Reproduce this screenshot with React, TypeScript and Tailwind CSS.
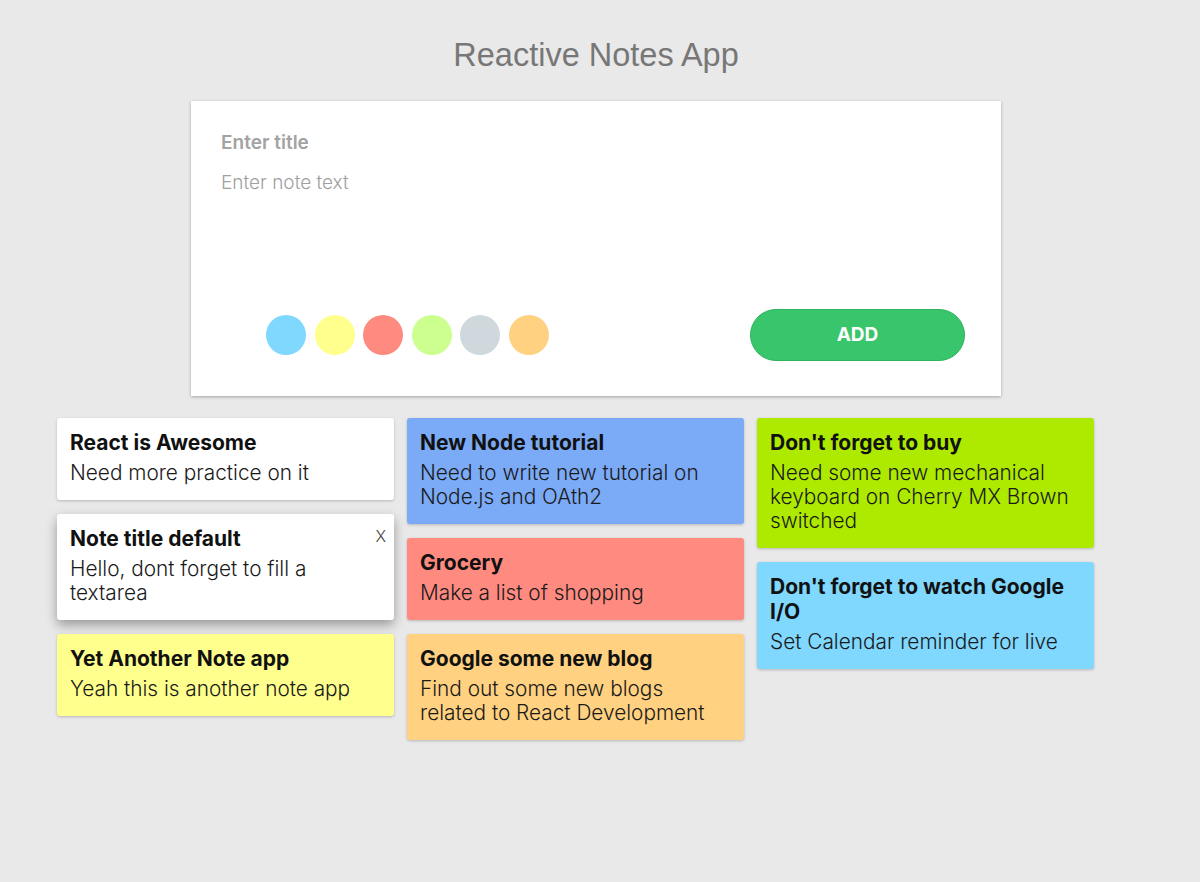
import React, { useState } from "react";

type Note = {
  id: number;
  title: string;
  text: string;
  color: string;
  hovered?: boolean;
};

const COLORS = ["#80d8ff", "#ffff8d", "#ff8a80", "#ccff90", "#cfd8dc", "#ffd180"];

const COLUMNS: Note[][] = [
  [
    { id: 1, title: "React is Awesome", text: "Need more practice on it", color: "#ffffff" },
    { id: 2, title: "Note title default", text: "Hello, dont forget to fill a textarea", color: "#ffffff", hovered: true },
    { id: 3, title: "Yet Another Note app", text: "Yeah this is another note app", color: "#ffff8d" },
  ],
  [
    { id: 4, title: "New Node tutorial", text: "Need to write new tutorial on Node.js and OAth2", color: "#7baaf7" },
    { id: 5, title: "Grocery", text: "Make a list of shopping", color: "#ff8a80" },
    { id: 6, title: "Google some new blog", text: "Find out some new blogs related to React Development", color: "#ffd180" },
  ],
  [
    { id: 7, title: "Don't forget to buy", text: "Need some new mechanical keyboard on Cherry MX Brown switched", color: "#aeea00" },
    { id: 8, title: "Don't forget to watch Google I/O", text: "Set Calendar reminder for live", color: "#80d8ff" },
  ],
];

function NoteCard({ note }: { note: Note }) {
  return (
    <div
      className={`relative rounded-[3px] pt-3 pb-[15px] px-[13px] ${
        note.hovered
          ? "shadow-[0_5px_12px_rgba(0,0,0,0.35)]"
          : "shadow-[0_1px_3px_rgba(0,0,0,0.22)]"
      }`}
      style={{ backgroundColor: note.color }}
    >
      {/* delete button only shows on the hovered card */}
      {note.hovered && (
        <span className="absolute top-[12px] right-[8px] text-[16px] leading-5 font-light text-[#444]">X</span>
      )}
      <h4 className="text-[21px] leading-[25px] font-bold text-[#111]">{note.title}</h4>
      <p className="mt-[6px] text-[20.8px] leading-6 font-light text-[#1a1a1a]">{note.text}</p>
    </div>
  );
}

export default function App() {
  const [activeColor, setActiveColor] = useState(COLORS[0]);

  return (
    <div className="min-h-screen bg-[#e9e9e9] font-['Inter',sans-serif]">
      <div className="w-[1192px] pb-10">
        <h1 className="pt-[35px] text-center font-['Liberation_Sans',Arial,sans-serif] text-[32.5px] leading-10 text-[#777]">
          Reactive Notes App
        </h1>

        {/* Editor */}
        <div className="mx-auto mt-[26px] flex w-[810px] flex-col bg-white shadow-[0_1px_3px_rgba(0,0,0,0.3)]">
          <input
            type="text"
            placeholder="Enter title"
            className="mx-[30px] mt-[30px] h-6 bg-transparent text-[19px] font-semibold text-[#999] placeholder:text-[#a3a3a3] focus:outline-none"
          />
          <textarea
            placeholder="Enter note text"
            className="mx-[30px] mt-4 h-[110px] resize-none bg-transparent text-[19px] leading-6 font-light placeholder:text-[#a0a0a0] focus:outline-none"
          />
          <div className="mt-7 mb-[35px] flex h-[52px] items-center justify-between pl-[75px] pr-9">
            <div className="flex gap-[8.6px]">
              {COLORS.map((c) => (
                <button
                  key={c}
                  onClick={() => setActiveColor(c)}
                  className="h-10 w-10 rounded-full"
                  style={{ backgroundColor: c }}
                  aria-label={c === activeColor ? "selected color" : "color"}
                />
              ))}
            </div>
            <button className="h-[52px] w-[215px] rounded-full border border-[#2fb35e] bg-[#39c56c] text-[19px] font-bold text-white">
              ADD
            </button>
          </div>
        </div>

        {/* Notes grid */}
        <div className="mt-[22px] flex items-start gap-[13px] pl-[57px]">
          {COLUMNS.map((col, i) => (
            <div key={i} className="flex w-[337px] flex-col gap-[14px]">
              {col.map((n) => (
                <NoteCard key={n.id} note={n} />
              ))}
            </div>
          ))}
        </div>
      </div>
    </div>
  );
}
